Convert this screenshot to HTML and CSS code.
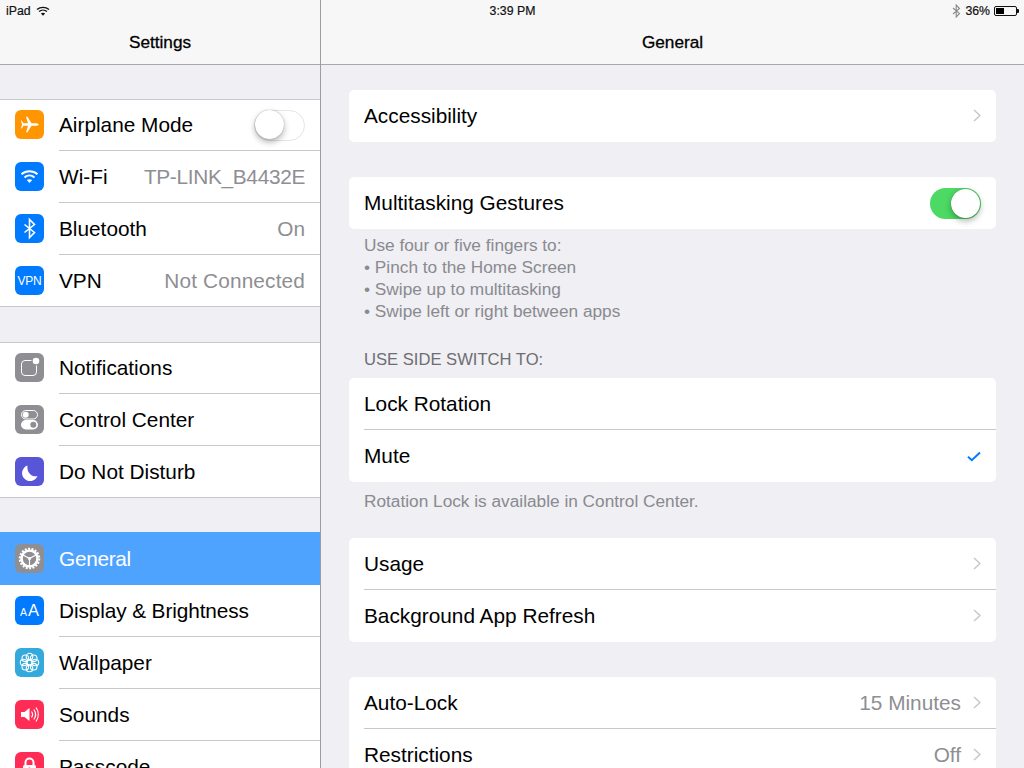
FILE: index.html
```html
<!DOCTYPE html>
<html lang="en">
<head>
<meta charset="utf-8">
<title>Settings - General</title>
<link rel="stylesheet" href="styles.css">
</head>
<body>
<div class="ipad">
  <div class="status">
    <div class="status-left"><span>iPad</span>
      <svg class="st-wifi" width="14" height="10" viewBox="0 0 14 10"><path d="M1 3.600C4.400.5 9.600.5 13 3.600" class="wf"/><path d="M3 5.600c2.300-2 5.700-2 8 0" class="wf"/><path d="M7 9.800 4.900 7.500c1.200-1 3-1 4.200 0z" fill="#111"/></svg>
    </div>
    <div class="status-mid">3:39 PM</div>
    <div class="status-right">
      <svg width="9" height="14" viewBox="0 0 9 14"><path d="M1 4l6.500 5.500L4.200 13V1l3.300 3.500L1 10" fill="none" stroke="#8a8a8a" stroke-width="1.100"/></svg>
      <span>36%</span>
      <span class="battery"><span class="battery-fill"></span></span>
    </div>
  </div>

  <aside class="side">
    <header class="nav"><h1>Settings</h1></header>
    <div class="side-scroll">
      <section class="side-group first">
        <div class="srow">
          <span class="ic orange"><svg viewBox="0 0 29 29" width="29" height="29"><path d="M24 14.500 22 13.300H16.500L12.500 6.700H11L13 13.300H8.500L6.700 10.500H6L7 14.500 6 18.500H6.700L8.500 15.700H13L11 22.300H12.500L16.500 15.700H22z" fill="#fff"/></svg></span>
          <span class="lbl">Airplane Mode</span>
          <span class="sw off"><span class="knob"></span></span>
        </div>
        <div class="srow">
          <span class="ic blue"><svg viewBox="0 0 29 29" width="29" height="29" fill="none" stroke="#fff" stroke-width="2"><path d="M6.500 12.200c4.600-4 11.400-4 16 0"/><path d="M9.500 15.400c2.900-2.400 7.100-2.400 10 0"/><path d="M14.500 21l-2.700-3c1.600-1.100 3.800-1.100 5.400 0z" fill="#fff" stroke="none"/></svg></span>
          <span class="lbl">Wi-Fi</span><span class="val tighter">TP-LINK_B4432E</span>
        </div>
        <div class="srow">
          <span class="ic blue"><svg viewBox="0 0 29 29" width="29" height="29"><path d="M9.500 10.500l10 8-5 5V5.500l5 5-10 8" fill="none" stroke="#fff" stroke-width="1.600"/></svg></span>
          <span class="lbl">Bluetooth</span><span class="val">On</span>
        </div>
        <div class="srow">
          <span class="ic blue vpn">VPN</span>
          <span class="lbl">VPN</span><span class="val wider">Not Connected</span>
        </div>
      </section>

      <section class="side-group">
        <div class="srow">
          <span class="ic gray"><svg viewBox="0 0 29 29" width="29" height="29"><rect x="6.500" y="7.500" width="15" height="15" rx="3.500" fill="none" stroke="#fff" stroke-width="1"/><circle cx="21" cy="8" r="4.600" fill="#8e8e93"/><circle cx="21" cy="8" r="3.300" fill="#fff"/></svg></span>
          <span class="lbl">Notifications</span>
        </div>
        <div class="srow">
          <span class="ic gray"><svg viewBox="0 0 29 29" width="29" height="29"><rect x="6.500" y="5.500" width="16" height="8.500" rx="4.250" fill="none" stroke="#fff" stroke-width="1"/><circle cx="10.700" cy="9.750" r="3" fill="#fff"/><rect x="6" y="15" width="17" height="9.500" rx="4.750" fill="#fff"/><circle cx="18.300" cy="19.750" r="3" fill="#8e8e93"/></svg></span>
          <span class="lbl">Control Center</span>
        </div>
        <div class="srow">
          <span class="ic indigo"><svg viewBox="0 0 29 29" width="29" height="29"><path d="M12.500 8.500a8 8 0 1 0 10 10.500c-5.500 1.500-11-3.500-10-10.500z" fill="#fff"/></svg></span>
          <span class="lbl">Do Not Disturb</span>
        </div>
      </section>

      <section class="side-group tight">
        <div class="srow active">
          <span class="ic gray"><svg viewBox="0 0 29 29" width="29" height="29"><circle cx="14.500" cy="14.500" r="8" fill="none" stroke="#fff" stroke-width="2.600"/><circle cx="14.500" cy="14.500" r="9.800" fill="none" stroke="#fff" stroke-width="2" stroke-dasharray="2 1.420"/><path d="M14.500 14.500L8 11M14.500 14.500L21 11M14.500 14.500V22" stroke="#fff" stroke-width="1.200"/><circle cx="14.500" cy="14.500" r="1.600" fill="#fff"/></svg></span>
          <span class="lbl tighter">General</span>
        </div>
        <div class="srow">
          <span class="ic blue aa"><span class="a-s">A</span><span class="a-l">A</span></span>
          <span class="lbl tight-text">Display &amp; Brightness</span>
        </div>
        <div class="srow">
          <span class="ic teal"><svg viewBox="0 0 29 29" width="29" height="29" fill="none" stroke="#fff" stroke-width="1.100"><circle cx="14.500" cy="14.500" r="2.500"/><circle cx="14.500" cy="8.600" r="3.300"/><circle cx="14.500" cy="20.400" r="3.300"/><circle cx="8.600" cy="14.500" r="3.300"/><circle cx="20.400" cy="14.500" r="3.300"/><circle cx="10.300" cy="10.300" r="3.300"/><circle cx="18.700" cy="10.300" r="3.300"/><circle cx="10.300" cy="18.700" r="3.300"/><circle cx="18.700" cy="18.700" r="3.300"/></svg></span>
          <span class="lbl">Wallpaper</span>
        </div>
        <div class="srow">
          <span class="ic pink"><svg viewBox="0 0 29 29" width="29" height="29"><path d="M6 12h3.500l5-4v13l-5-4H6z" fill="#fff"/><g fill="none" stroke="#fff" stroke-width="1.200"><path d="M16.500 11.500c1.300 1.800 1.300 4.200 0 6"/><path d="M18.800 9.500c2.200 3 2.200 7 0 10"/><path d="M21 7.500c3 4.200 3 9.800 0 14"/></g></svg></span>
          <span class="lbl">Sounds</span>
        </div>
        <div class="srow">
          <span class="ic pink"><svg viewBox="0 0 29 29" width="29" height="29"><path d="M10.500 13v-2.500a4 4 0 0 1 8 0V13" fill="none" stroke="#fff" stroke-width="2"/><rect x="8" y="13" width="13" height="10" rx="1.500" fill="#fff"/><circle cx="14.500" cy="17" r="1.500" fill="#ff2d55"/><rect x="13.800" y="17" width="1.400" height="3.500" fill="#ff2d55"/></svg></span>
          <span class="lbl">Passcode</span>
        </div>
      </section>
    </div>
  </aside>

  <main class="main">
    <header class="nav"><h1>General</h1></header>
    <div class="main-scroll">
      <section class="card">
        <div class="crow"><span class="lbl">Accessibility</span><svg class="chev" width="8" height="13" viewBox="0 0 8 13"><path d="M1 1l6 5.500-6 5.500"/></svg></div>
      </section>

      <section class="card gap-a">
        <div class="crow"><span class="lbl">Multitasking Gestures</span><span class="sw on"><span class="knob"></span></span></div>
      </section>
      <p class="note gestures">Use four or five fingers to:<br>• Pinch to the Home Screen<br>• Swipe up to multitasking<br>• Swipe left or right between apps</p>
      <p class="head">USE SIDE SWITCH TO:</p>
      <section class="card">
        <div class="crow"><span class="lbl">Lock Rotation</span></div>
        <div class="crow"><span class="lbl">Mute</span>
          <svg class="check" width="14" height="11" viewBox="0 0 14 11"><path d="M1 5.800l3.800 3.400L13 1.500" fill="none" stroke="#007aff" stroke-width="2"/></svg>
        </div>
      </section>
      <p class="note single">Rotation Lock is available in Control Center.</p>

      <section class="card gap-b">
        <div class="crow"><span class="lbl">Usage</span><svg class="chev" width="8" height="13" viewBox="0 0 8 13"><path d="M1 1l6 5.500-6 5.500"/></svg></div>
        <div class="crow"><span class="lbl">Background App Refresh</span><svg class="chev" width="8" height="13" viewBox="0 0 8 13"><path d="M1 1l6 5.500-6 5.500"/></svg></div>
      </section>

      <section class="card gap-c">
        <div class="crow"><span class="lbl">Auto-Lock</span><span class="val">15 Minutes</span><svg class="chev" width="8" height="13" viewBox="0 0 8 13"><path d="M1 1l6 5.500-6 5.500"/></svg></div>
        <div class="crow"><span class="lbl">Restrictions</span><span class="val">Off</span><svg class="chev" width="8" height="13" viewBox="0 0 8 13"><path d="M1 1l6 5.500-6 5.500"/></svg></div>
      </section>
    </div>
  </main>
</div>
</body>
</html>
```

FILE: styles.css
```css
* { box-sizing: border-box; }
html, body { margin: 0; padding: 0; }
body { background: #efeff4; font-family: "Liberation Sans", Arial, sans-serif; color: #000; }

.ipad {
  position: relative;
  width: 1024px;
  height: 768px;
  overflow: hidden;
  display: grid;
  grid-template-columns: 321px 703px;
  background: #efeff4;
}

/* status bar lies over both navigation bars */
.status {
  position: absolute;
  top: 0; left: 0;
  width: 1024px;
  height: 21px;
  padding: 1px 5px 0 6px;
  display: grid;
  grid-template-columns: 1fr auto 1fr;
  align-items: center;
  font-size: 12.300px;
  color: #111;
  z-index: 2;
}
.status-left { display: flex; align-items: center; gap: 5px; }
.wf { fill: none; stroke: #111; stroke-width: 1.300; }
.status-mid { font-weight: 400; -webkit-text-stroke: .2px #111; }
.status-left span, .status-right span { -webkit-text-stroke: .2px #111; }
.status-right { display: flex; align-items: center; justify-content: flex-end; gap: 4px; }
.battery {
  position: relative;
  width: 23px;
  height: 10px;
  border: 1px solid #111;
  border-radius: 2px;
  padding: 1px;
  display: flex;
  margin-right: 2px;
}
.battery::after {
  content: "";
  position: absolute;
  right: -3px; top: 2px;
  width: 2px; height: 4px;
  background: #111;
  border-radius: 0 1px 1px 0;
}
.battery-fill { width: 8px; background: #000; }

.nav {
  height: 65px;
  padding-top: 21px;
  background: #f7f7f8;
  border-bottom: 1px solid #a9a9ab;
  display: flex;
  align-items: center;
  justify-content: center;
}
.nav h1 { margin: 0; font-size: 17.200px; font-weight: 400; -webkit-text-stroke: .3px #000; }

.side { border-right: 1px solid #9d9da0; height: 768px; overflow: hidden; }
.side-group {
  margin-top: 35px;
  background: #fff;
}
/* the group's hairlines lie on the first and last rows' outer pixels */
.side-group::before,
.side-group::after {
  content: "";
  display: block;
  position: relative;
  height: 1px;
  background: #c8c7cc;
}
.side-group::before { margin-bottom: -1px; }
.side-group::after { margin-top: -1px; }
.side-group.first { margin-top: 34px; }
.side-group.tight { margin-top: 34px; }
.side-group.tight::before { display: none; }

.srow {
  position: relative;
  height: 52px;
  padding: 0 15px;
  display: flex;
  align-items: center;
  font-size: 20.800px;
}
.srow + .srow::before {
  content: "";
  position: absolute;
  top: -1px; left: 59px; right: 0;
  height: 1px;
  background: #c8c7cc;
}
.srow.active { background: #4ea3ff; color: #fff; height: 53px; }
.srow.active + .srow::before { display: none; }

.ic {
  flex: none;
  width: 29px; height: 29px;
  border-radius: 6px;
  margin: -1px 15px 0 0;
  display: flex;
  align-items: center;
  justify-content: center;
  color: #fff;
}
.active .ic { margin-top: 0; }
.orange { background: #ff9500; }
.blue { background: #007aff; }
.gray { background: #8e8e93; }
.indigo { background: #5856d6; }
.teal { background: #34aadc; }
.pink { background: #ff2d55; }
.vpn { font-size: 12px; letter-spacing: -.3px; }
.aa { align-items: baseline; gap: 1px; line-height: 29px; }
.a-s { font-size: 10.500px; }
.a-l { font-size: 16.500px; }

.lbl { flex: 1; white-space: nowrap; }
.val { color: #8e8e93; white-space: nowrap; }
.tighter { letter-spacing: -.3px; }
.tight-text { letter-spacing: -.1px; }
.wider { letter-spacing: .15px; }

.sw {
  position: relative;
  flex: none;
  width: 51px; height: 31px;
  border-radius: 16px;
}
.sw.off { border: 1.500px solid #e5e5e5; background: #fff; }
.sw.on { background: #4cd964; }
.knob {
  position: absolute;
  width: 29px; height: 29px;
  border-radius: 50%;
  background: #fff;
  box-shadow: 0 3px 6px rgba(0,0,0,.3), 0 0 1px rgba(0,0,0,.4);
}
.sw.off .knob { left: -.5px; top: -.5px; }
.sw.on .knob { right: 1px; top: 1px; }

.main-scroll { padding: 25px 28px 0; }
.card { background: #fff; border-radius: 5px; overflow: hidden; }
.gap-a { margin-top: 35px; }
.gap-b { margin-top: 26px; }
.gap-c { margin-top: 35px; }

.crow {
  position: relative;
  height: 52px;
  padding: 0 15px;
  display: flex;
  align-items: center;
  font-size: 20.800px;
}
.crow + .crow::before {
  content: "";
  position: absolute;
  top: -1px; left: 15px; right: 0;
  height: 1px;
  background: #c8c7cc;
}
.chev {
  flex: none;
  margin: -1px 0 0 12px;
  fill: none;
  stroke: #c7c7cc;
  stroke-width: 1.500;
}
.check { flex: none; }

.note { margin: 0; padding: 0 15px; font-size: 17.250px; line-height: 22px; color: #8a8a8f; }
.note.gestures { margin-top: 5px; }
.note.single { margin-top: 8px; }
.head { margin: 27px 0 7px; padding: 0 15px; font-size: 16.600px; line-height: 22px; color: #6d6d72; }
```
